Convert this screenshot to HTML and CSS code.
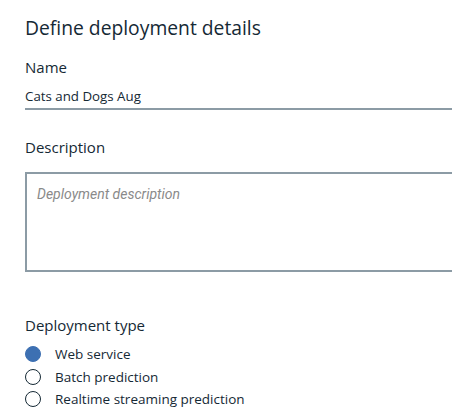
FILE: index.html
```html
<!DOCTYPE html>
<html lang="en">
<head>
<meta charset="utf-8">
<title>Define deployment details</title>
<link rel="stylesheet" href="styles.css">
</head>
<body>
<main class="form">
  <h1 class="title">Define deployment details</h1>
  <div class="field field-name">
    <label class="label" for="name">Name</label>
    <input class="text-input" id="name" type="text" value="Cats and Dogs Aug">
  </div>
  <div class="field field-desc">
    <label class="label" for="desc">Description</label>
    <textarea class="text-area" id="desc" placeholder="Deployment description"></textarea>
  </div>
  <fieldset class="field field-type">
    <legend class="label">Deployment type</legend>
    <label class="radio"><span class="radio-dot checked"></span><span class="radio-text">Web service</span></label>
    <label class="radio"><span class="radio-dot"></span><span class="radio-text">Batch prediction</span></label>
    <label class="radio"><span class="radio-dot"></span><span class="radio-text">Realtime streaming prediction</span></label>
  </fieldset>
</main>
</body>
</html>
```

FILE: styles.css
```css
html, body {
  margin: 0;
  padding: 0;
  overflow: hidden;
  background: #ffffff;
}
body {
  font-family: "Open Sans", "Noto Sans", sans-serif;
  color: #152935;
}
.form {
  padding: 16px 0 0 25px;
  display: flex;
  flex-direction: column;
}
.title {
  margin: 0;
  font-size: 19.3px;
  line-height: 24px;
  font-weight: 400;
  color: #152935;
}
.field {
  display: flex;
  flex-direction: column;
}
.label {
  font-size: 15px;
  line-height: 18px;
  color: #152935;
  padding: 0;
}
.field-name {
  margin-top: 18px;
}
.text-input {
  width: 440px;
  margin: 11px 0 0;
  padding: 0 0 3px;
  border: 0;
  border-bottom: 2px solid #8c9ba5;
  font-family: inherit;
  font-size: 13.3px;
  line-height: 18px;
  color: #152935;
  outline: none;
  background: transparent;
}
.field-desc {
  margin-top: 28px;
}
.text-area {
  box-sizing: border-box;
  width: 440px;
  height: 100px;
  margin: 16px 0 0;
  padding: 11px 10px;
  border: 2px solid #8c9ba5;
  resize: none;
  font-family: Roboto, "Open Sans", sans-serif;
  font-size: 14px;
  line-height: 18px;
  outline: none;
}
.text-area::placeholder {
  font-style: italic;
  color: #8a8a8a;
}
.field-type {
  margin: 44px 0 0;
  padding: 0;
  border: 0;
  gap: 4.5px;
}
.field-type legend {
  margin-bottom: 11px;
}
.radio {
  display: flex;
  align-items: center;
  gap: 14px;
  height: 18px;
  font-size: 13.5px;
  color: #152935;
}
.radio-dot {
  box-sizing: border-box;
  width: 16px;
  height: 16px;
  border-radius: 50%;
  border: 1px solid #152935;
}
.radio-dot.checked {
  background: #3d70b2;
  border-color: #3d70b2;
}
```
